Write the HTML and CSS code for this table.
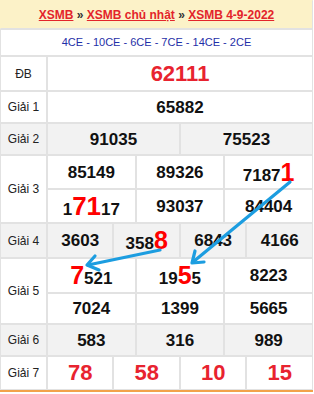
FILE: index.html
```html
<!DOCTYPE html>
<html lang="vi">
<head>
<meta charset="utf-8">
<title>XSMB 4-9-2022</title>
<link rel="stylesheet" href="styles.css">
</head>
<body>
<div class="board">
  <table class="kq">
    <colgroup>
      <col class="c-lbl">
      <col span="12" class="c-num">
    </colgroup>
    <tr class="r-title">
      <td colspan="13" class="title">
        <a href="#">XSMB</a> <span class="sep">»</span> <a href="#">XSMB chủ nhật</a> <span class="sep">»</span> <a href="#">XSMB 4-9-2022</a>
      </td>
    </tr>
    <tr class="r-codes">
      <td colspan="13" class="codes">4CE - 10CE - 6CE - 7CE - 14CE - 2CE</td>
    </tr>
    <tr class="r-db">
      <td class="lbl">ĐB</td>
      <td colspan="12" class="num db">62111</td>
    </tr>
    <tr class="r-g1">
      <td class="lbl">Giải 1</td>
      <td colspan="12" class="num">65882</td>
    </tr>
    <tr class="r-g2 grey">
      <td class="lbl">Giải 2</td>
      <td colspan="6" class="num">91035</td>
      <td colspan="6" class="num">75523</td>
    </tr>
    <tr class="r-g3a">
      <td class="lbl" rowspan="2">Giải 3</td>
      <td colspan="4" class="num">85149</td>
      <td colspan="4" class="num">89326</td>
      <td colspan="4" class="num">7187<span class="mark">1</span></td>
    </tr>
    <tr class="r-g3b">
      <td colspan="4" class="num">1<span class="mark big">71</span>17</td>
      <td colspan="4" class="num">93037</td>
      <td colspan="4" class="num">84404</td>
    </tr>
    <tr class="r-g4 grey">
      <td class="lbl">Giải 4</td>
      <td colspan="3" class="num">3603</td>
      <td colspan="3" class="num">358<span class="mark">8</span></td>
      <td colspan="3" class="num">6843</td>
      <td colspan="3" class="num">4166</td>
    </tr>
    <tr class="r-g5a">
      <td class="lbl" rowspan="2">Giải 5</td>
      <td colspan="4" class="num"><span class="mark">7</span>521</td>
      <td colspan="4" class="num">19<span class="mark">5</span>5</td>
      <td colspan="4" class="num">8223</td>
    </tr>
    <tr class="r-g5b">
      <td colspan="4" class="num">7024</td>
      <td colspan="4" class="num">1399</td>
      <td colspan="4" class="num">5665</td>
    </tr>
    <tr class="r-g6 grey">
      <td class="lbl">Giải 6</td>
      <td colspan="4" class="num">583</td>
      <td colspan="4" class="num">316</td>
      <td colspan="4" class="num">989</td>
    </tr>
    <tr class="r-g7">
      <td class="lbl">Giải 7</td>
      <td colspan="3" class="num g7">78</td>
      <td colspan="3" class="num g7">58</td>
      <td colspan="3" class="num g7">10</td>
      <td colspan="3" class="num g7">15</td>
    </tr>
  </table>
  <svg class="arrows" width="314" height="394" viewBox="0 0 314 394" aria-hidden="true">
    <g fill="none" stroke="#1c9de0" stroke-width="3.2" stroke-linecap="round" stroke-linejoin="round">
      <path d="M290 182 L193 262"/>
      <path d="M204 262 L192 263 L195 251"/>
      <path d="M160 250 L88 265"/>
      <path d="M99 270 L87 265 L95 256"/>
    </g>
  </svg>
</div>
</body>
</html>
```

FILE: styles.css
```css
html, body {
  margin: 0;
  padding: 0;
  background: #ffffff;
}

body {
  font-family: "Liberation Sans", Arial, sans-serif;
  color: #222222;
}

.board {
  position: relative;
  width: 314px;
  height: 394px;
  overflow: hidden;
}

.kq {
  width: 313px;
  table-layout: fixed;
  border-collapse: separate;
  border-spacing: 0;
  border-bottom: 2px solid #f2a24a;
}

.c-lbl { width: 47px; }

.kq td {
  border: 1px solid #e2e2e2;
  padding: 0;
  text-align: center;
  vertical-align: middle;
  line-height: 1;
  white-space: nowrap;
}

.r-title { height: 29px; }
.r-codes { height: 27px; }
.r-db { height: 35px; }
.r-g1 { height: 32px; }
.r-g2 { height: 32px; }
.r-g3a { height: 34px; }
.r-g3b { height: 34px; }
.r-g4 { height: 35px; }
.r-g5a { height: 35px; }
.r-g5b { height: 31px; }
.r-g6 { height: 32px; }
.r-g7 { height: 34px; }

.kq td.title {
  background: #fcf2c8;
  border-color: #fcf2c8 #e2e2e2 #e2e2e2 #fcf2c8;
  font-size: 12px;
  font-weight: bold;
}

.title a {
  color: #e3242b;
  text-decoration: underline;
}

.title .sep {
  color: #333333;
}

.codes {
  font-size: 11px;
  color: #1f2fa8;
}

.lbl {
  font-size: 12px;
  color: #222222;
}

.num {
  font-size: 17px;
  font-weight: bold;
  color: #111111;
}

.grey td {
  background: #f2f2f2;
}

.db {
  font-size: 22px;
  color: #e8232f;
}

.g7 {
  font-size: 22px;
  color: #e8232f;
}

.mark {
  font-size: 25px;
  color: #ff0000;
}

.mark.big {
  font-size: 26px;
}

.arrows {
  position: absolute;
  left: 0;
  top: 0;
  pointer-events: none;
}
```
